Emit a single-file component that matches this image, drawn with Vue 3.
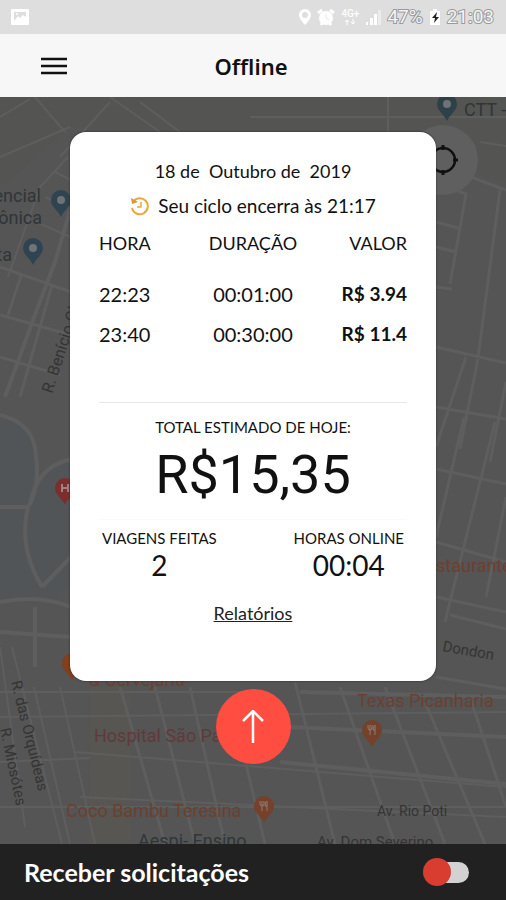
<template>
  <div class="app">
    <div class="status">
      <svg class="status__photo" viewBox="0 0 18 16" width="18" height="16" aria-hidden="true">
        <rect width="18" height="16" rx="1" fill="#fff" />
        <path d="M3 12V3h12v5l-3-2-3 3-2-2z" fill="#dedede" />
        <circle cx="6" cy="5" r="1" fill="#fff" />
      </svg>
      <div class="status__icons">
        <svg viewBox="0 0 12 18" width="12" height="18" aria-hidden="true">
          <path fill="#fff" fill-rule="evenodd" d="M6 1a6 6 0 0 0-6 6c0 4 6 10 6 10s6-6 6-10a6 6 0 0 0-6-6zm0 3a3 3 0 1 1 0 6 3 3 0 0 1 0-6z" />
        </svg>
        <svg viewBox="0 0 18 18" width="18" height="18" aria-hidden="true">
          <circle cx="9" cy="10" r="7" fill="#fff" />
          <path d="M1 5l4-3M17 5l-4-3M4 17l2-3M14 17l-2-3" stroke="#fff" stroke-width="3" />
          <path d="M9 6v4l3 2" fill="none" stroke="#e8e8e8" />
        </svg>
        <div class="status__net">
          <span>4G+</span>
          <svg viewBox="0 0 12 6" width="12" height="6" aria-hidden="true">
            <path d="M3 6V1M1 3l2-2 2 2M9 0v5M7 3l2 2 2-2" fill="none" stroke="#fff" />
          </svg>
        </div>
        <svg viewBox="0 0 16 16" width="16" height="16" aria-hidden="true">
          <path d="M1 13h2v3H1zM5 9h3v7H5zM9 5h3v11H9z" fill="#fff" />
          <path d="M13 1h3v15h-3z" fill="#ececec" />
        </svg>
        <span class="status__text">47%</span>
        <svg viewBox="0 0 12 18" width="12" height="18" aria-hidden="true">
          <path d="M1 3h3V1h4v2h3v14H1z" fill="#fff" />
          <path d="M8 4L3 10h3l-1 5 5-6H7z" fill="#222" />
        </svg>
        <span class="status__text">21:03</span>
      </div>
    </div>

    <header class="bar">
      <button class="bar__menu" type="button" aria-label="Menu">
        <svg viewBox="0 0 26 18" width="26" height="18">
          <path d="M0 2h26M0 9h26M0 16h26" stroke="#111" stroke-width="2.500" />
        </svg>
      </button>
      <h1>Offline</h1>
    </header>

    <main class="content">
      <svg class="map" viewBox="0 0 506 747" preserveAspectRatio="xMidYMin slice" aria-hidden="true">
        <rect width="506" height="747" fill="#555" />
        <path d="M0 0h506v85l-70-18L71 30 0 90z" fill="#545453" />
        <path d="M0 318q34 8 36 40 4 34 35 38v88q-8 20-38 22L0 500zM30 400q12-32 41-40v80q-30 8-41-40z" fill="#525557" />
        <path d="M90 590h40v157H88z" fill="#575652" />
        <path v-for="(road, i) in roads" :key="i" :d="road.d" fill="none" stroke="#5e5e5e" :stroke-width="road.w" />

        <g v-for="(pin, i) in pins" :key="'p' + i" :transform="`translate(${pin.x} ${pin.y})`">
          <path d="M0 17C-3 10-10 7-10 0a10 10 0 0 1 20 0C10 7 3 10 0 17z" :fill="pin.color" />
          <circle v-if="pin.kind === 'place'" r="4" fill="#6d7376" />
          <path v-else-if="pin.kind === 'food'" d="M-2-5V5M-4-5v3q0 2 2 2t2-2v-3M3 5v-10q-2 1-2 5h2" fill="none" stroke="#8f7c70" />
          <path v-else-if="pin.kind === 'hospital'" d="M-3-4v8M3-4v8M-3 0h6" fill="none" stroke="#a58080" stroke-width="2" />
        </g>

        <text
          v-for="label in labels"
          :key="label.text"
          :class="['label', 'label--' + label.kind]"
          :font-size="label.size"
          :text-anchor="label.anchor"
          :transform="`translate(${label.x} ${label.y}) rotate(${label.turn || 0})`"
        >{{ label.text }}</text>
      </svg>

      <button class="locate" type="button" aria-label="Minha localização">
        <svg viewBox="0 0 32 32" width="32" height="32">
          <circle cx="16" cy="16" r="12" fill="none" stroke="#111" stroke-width="2.500" />
          <path d="M16 1v5M16 26v5M1 16h5M26 16h5" stroke="#111" stroke-width="3" />
        </svg>
      </button>

      <section class="card">
        <p class="card__date">{{ date }}</p>
        <p class="card__cycle">
          <svg viewBox="0 0 20 20" width="20" height="20" aria-hidden="true">
            <path d="M3 6a8 8 0 1 1-1 6" fill="none" stroke="#e9a93c" stroke-width="2" />
            <path d="M1 2l1 6 6-2z" fill="#e2982a" />
            <path d="M11 6v5H7" fill="none" stroke="#e9a93c" stroke-width="1.500" />
          </svg>
          <span>Seu ciclo encerra às 21:17</span>
        </p>

        <table>
          <thead>
            <tr>
              <th>HORA</th>
              <th>DURAÇÃO</th>
              <th>VALOR</th>
            </tr>
          </thead>
          <tbody>
            <tr v-for="trip in trips" :key="trip.hour">
              <td>{{ trip.hour }}</td>
              <td>{{ trip.duration }}</td>
              <td>{{ trip.value }}</td>
            </tr>
          </tbody>
        </table>

        <div class="total">
          <h2>TOTAL ESTIMADO DE HOJE:</h2>
          <p>R$15,35</p>
        </div>

        <div class="stats">
          <div v-for="stat in stats" :key="stat.name">
            <h3>{{ stat.name }}</h3>
            <p>{{ stat.value }}</p>
          </div>
        </div>

        <a class="card__link" href="#">Relatórios</a>
      </section>

      <button class="go" type="button" aria-label="Recolher">
        <svg viewBox="0 0 24 34" width="24" height="34">
          <path d="M12 33V2M2 11L12 1l10 10" fill="none" stroke="#fff" stroke-width="2.500" />
        </svg>
      </button>
    </main>

    <footer class="footer">
      <label for="receive">Receber solicitações</label>
      <input id="receive" v-model="receiving" type="checkbox" role="switch">
    </footer>
  </div>
</template>

<script setup>
import { ref } from 'vue'

const receiving = ref(false)

const date = '18 de  Outubro de  2019'

const trips = [
  { hour: '22:23', duration: '00:01:00', value: 'R$ 3.94' },
  { hour: '23:40', duration: '00:30:00', value: 'R$ 11.4' }
]

const stats = [
  { name: 'VIAGENS FEITAS', value: '2' },
  { name: 'HORAS ONLINE', value: '00:04' }
]

const roads = [
  { w: 2, d: 'M0 20L30 2M35 0l30 35M60 60L110 5M110 0l50 35M140 5l40 30M0 60l70-30' },
  { w: 2, d: 'M68 60L40 90 8 180M55 75l16 8M45 100l26 12M36 125l35 15' },
  { w: 4, d: 'M71 110L55 165 36 215 5 300' },
  { w: 3, d: 'M0 170l71 25M0 218l71 20M0 260l60 18M22 176L8 218M52 188L20 300' },
  { w: 4, d: 'M0 318q34 8 36 40 4 34-8 52-10 40 14 80M71 362q-35 8-41 46M0 410h28M42 490l29-30M0 505q40-8 71 5M0 535l71 5M35 510v60' },
  { w: 3, d: 'M436 67l70 26M436 85l30 12-16 90M436 125l22 6M436 150l20 5M436 190l16 2M500 93l-22 168M436 250l70 16M466 260l-30 90M478 262l-18 90M506 285l-16 80M436 310l70 12M464 320l-28 120M495 325l-50 200' },
  { w: 3, d: 'M436 372l70 15M436 445l70 20M436 500l70 15M506 400l-20 100M450 518l56 14M436 580l70 12' },
  { w: 2, d: 'M0 550l25 180M12 550l50 197M34 590l36 157M0 620l506-5M0 595h250M0 665l90-4M60 590l35 157M75 655l431 35M80 700l426 20M0 710h506' },
  { w: 3, d: 'M120 590l45 157M155 590l40 157M190 590l35 157M230 600l35 147M295 585l40 162M340 590l55 157M385 590l60 157M425 605l60 142M470 600l36 110' },
  { w: 4, d: 'M280 665l226 22M290 630l216 10M300 595l206 5' },
  { w: 2, d: 'M250 20h256M388 0v35M480 45l26 4' }
]

const pins = [
  { x: 447, y: 7, color: '#2f4148', kind: 'place' },
  { x: 61, y: 103, color: '#2f4450', kind: 'place' },
  { x: 33, y: 151, color: '#2f4450', kind: 'place' },
  { x: 65, y: 391, color: '#7d2d2c', kind: 'hospital' },
  { x: 72, y: 566, color: '#823f19', kind: 'plain' },
  { x: 372, y: 633, color: '#75412a', kind: 'food' },
  { x: 264, y: 709, color: '#75412a', kind: 'food' }
]

const labels = [
  { text: 'CTT -', x: 464, y: 19, size: 18, kind: 'place' },
  { text: 'encial', x: 41, y: 105, size: 18, anchor: 'end', kind: 'place' },
  { text: 'ônica', x: 42, y: 127, size: 18, anchor: 'end', kind: 'place' },
  { text: 'ta', x: 12, y: 164, size: 18, anchor: 'end', kind: 'place' },
  { text: 'R. Benício Ol', x: 52, y: 297, size: 16, turn: -72, kind: 'road' },
  { text: 'staurante', x: 436, y: 475, size: 18, kind: 'food' },
  { text: 'Dondon', x: 442, y: 554, size: 15, turn: 10, kind: 'road' },
  { text: '& Cervejaria', x: 89, y: 589, size: 18, kind: 'food' },
  { text: 'Texas Picanharia', x: 357, y: 610, size: 18, kind: 'food' },
  { text: 'Hospital São Paulo', x: 94, y: 645, size: 18, kind: 'hospital' },
  { text: 'Coco Bambu Teresina', x: 66, y: 720, size: 18, kind: 'food' },
  { text: 'Aespi- Ensino', x: 138, y: 750, size: 18, kind: 'place' },
  { text: 'Av. Rio Poti', x: 377, y: 719, size: 14, kind: 'road' },
  { text: 'Av. Dom Severino', x: 317, y: 750, size: 15, kind: 'road' },
  { text: 'R. das Orquídeas', x: 11, y: 585, size: 15, turn: 76, kind: 'road' },
  { text: 'R. Miosótes', x: 0, y: 632, size: 15, turn: 78, kind: 'road' }
]
</script>

<style>
body {
  margin: 0;
}
</style>

<style scoped>
.app {
  min-height: 100vh;
  display: flex;
  flex-direction: column;
  font-family: Lato, "Liberation Sans", sans-serif;
  color: #111;
}
h1, h2, h3, p {
  margin: 0;
  font-weight: 400;
}
button {
  display: flex;
  align-items: center;
  justify-content: center;
  padding: 0;
  border: 0;
  cursor: pointer;
}
.status {
  height: 34px;
  padding: 0 12px 0 11px;
  display: flex;
  align-items: center;
  justify-content: space-between;
  background: #dedede;
}
.status__icons {
  display: flex;
  align-items: center;
  gap: 6px;
}
.status__net {
  width: 18px;
  display: flex;
  flex-direction: column;
  align-items: center;
  font: 500 10px/10px Roboto, sans-serif;
  color: #fff;
}
.status__text {
  font: 400 19px/24px Roboto, sans-serif;
  color: #f4f4f4;
  -webkit-text-stroke: 2px #999;
  paint-order: stroke fill;
}
.bar {
  height: 63px;
  display: grid;
  grid-template-columns: 108px 1fr 112px;
  align-items: center;
  background: #f7f7f7;
}
.bar__menu {
  height: 48px;
  background: none;
}
.bar h1 {
  font: 600 22px/32px "Noto Sans", sans-serif;
  text-align: center;
}
.content {
  flex: 1;
  position: relative;
  display: flex;
  flex-direction: column;
  align-items: center;
  gap: 8px;
  padding: 35px 70px 80px;
  overflow: hidden;
}
.map {
  position: absolute;
  top: 0;
  left: 0;
  width: 100%;
  height: 100%;
}
.label {
  font-family: Roboto, sans-serif;
}
.label--place {
  fill: #2f3538;
}
.label--road {
  fill: #343434;
}
.label--food {
  fill: #6b4030;
}
.label--hospital {
  fill: #603a3a;
}
.locate {
  position: absolute;
  top: 28px;
  right: 28px;
  width: 70px;
  height: 70px;
  border-radius: 50%;
  background: #5f5f5f;
}
.card {
  position: relative;
  box-sizing: border-box;
  width: 100%;
  padding: 22px 29px 56px;
  border-radius: 16px;
  background: #fff;
  text-align: center;
  box-shadow: 0 0 2px #222;
}
.card__date {
  font-size: 18px;
  line-height: 34px;
  white-space: pre;
}
.card__cycle {
  display: flex;
  align-items: center;
  justify-content: center;
  gap: 8px;
  font-size: 19px;
  line-height: 36px;
}
table {
  width: 100%;
  table-layout: fixed;
  border-collapse: collapse;
  font-size: 20px;
}
th {
  height: 50px;
  padding: 0;
  font-size: 18px;
  font-weight: 400;
  line-height: 38px;
  vertical-align: top;
}
td {
  padding: 0;
  line-height: 40px;
}
th:first-child, td:first-child {
  text-align: left;
}
th:last-child, td:last-child {
  text-align: right;
}
td:last-child {
  font-size: 19px;
  font-weight: 700;
}
.total {
  margin-top: 48px;
  padding: 12px 0 8px;
  border-top: 1px solid #e6e6e6;
  border-bottom: 1px solid #fafafa;
}
.total h2 {
  font-size: 15px;
  line-height: 24px;
}
.total p {
  font: 400 54px/72px Roboto, sans-serif;
}
.stats {
  display: flex;
  justify-content: space-between;
  padding: 7px 3px 0;
}
.stats h3 {
  font-size: 15px;
  line-height: 22px;
}
.stats p {
  font-size: 28px;
  line-height: 32px;
}
.card__link {
  display: inline-block;
  margin-top: 20px;
  font-size: 18px;
  line-height: 24px;
  color: #222;
}
.go {
  position: relative;
  width: 75px;
  height: 75px;
  border-radius: 50%;
  background: #ff4d42;
}
.footer {
  height: 56px;
  padding: 0 37px 0 24px;
  display: flex;
  align-items: center;
  justify-content: space-between;
  background: #212121;
  color: #fff;
}
.footer label {
  font-size: 25px;
  font-weight: 700;
}
.footer input {
  appearance: none;
  width: 46px;
  height: 28px;
  margin: 0;
  display: grid;
  align-items: center;
  cursor: pointer;
}
.footer input::before,
.footer input::after {
  content: "";
  grid-area: 1 / 1;
}
.footer input::before {
  justify-self: end;
  width: 40px;
  height: 21px;
  border-radius: 11px;
  background: #d2d2d2;
}
.footer input::after {
  width: 28px;
  height: 28px;
  border-radius: 50%;
  background: #d83d30;
}
.footer input:checked::after {
  justify-self: end;
}
</style>
